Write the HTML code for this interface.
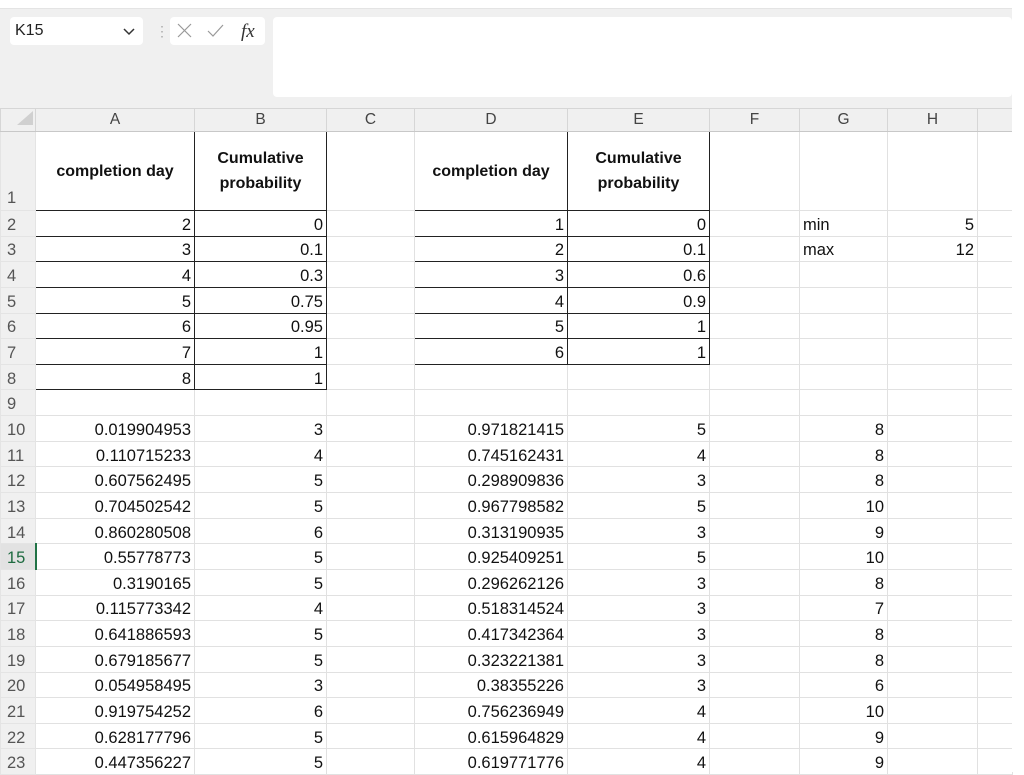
<!DOCTYPE html>
<html><head><meta charset="utf-8"><style>
*{margin:0;padding:0;box-sizing:border-box}
body{width:1024px;height:772px;overflow:hidden;background:#fff;font-family:"Liberation Sans",sans-serif;position:relative}
.bar{position:absolute;left:0;top:8px;width:1012px;height:100px;background:#f0f0f0;border-top:1px solid #e4e4e4}
.nb{position:absolute;left:10px;top:17px;width:133px;height:28px;background:#fff;border-radius:4px;font-size:16px;padding:5px 5px;color:#222}
.fx{position:absolute;left:170px;top:17px;width:95px;height:28px;background:#fff;border-radius:4px}
.fbox{position:absolute;left:273px;top:17px;width:739px;height:80px;background:#fff;border-radius:4px}
table{position:absolute;left:0;top:108px;border-collapse:collapse;table-layout:fixed;font-size:16.5px;color:#111}
td{border:1px solid #e1e1e1;height:25.65px;white-space:nowrap;overflow:hidden;padding:3px 3px 0;text-align:right;line-height:20px}
tr.h td{background:#f0f0f0;height:23px;padding:0;text-align:center;color:#444;font-size:15.5px;border-color:#d6d6d6;border-bottom:1px solid #c8c8c8}
td.rh{background:#f0f0f0;color:#555;text-align:left;padding-left:6px;border-color:#e4e4e4;font-size:16.5px}
tr.r1 td{height:79px}
td.b{border:1px solid #222}
td.hd{font-weight:bold;text-align:center;white-space:normal;line-height:25px;font-size:16px;padding:0 2px}
td.l{text-align:left}
</style></head><body>
<div class="bar"></div>
<div class="nb">K15<svg width="14" height="10" style="position:absolute;left:112px;top:10px"><path d="M2 2l5 5 5-5" stroke="#333" stroke-width="1.5" fill="none"/></svg></div>
<div style="position:absolute;left:155px;top:23px;color:#aaa;font-size:14px">&#8942;</div>
<div class="fx">
<svg width="95" height="28"><path d="M8 7l13 13M21 7L8 20" stroke="#999" stroke-width="1.2"/><path d="M38 14l5 5 10-11" stroke="#999" stroke-width="1.2" fill="none"/><text x="71" y="20" font-family="Liberation Serif" font-style="italic" font-size="19" fill="#333">fx</text></svg>
</div>
<div class="fbox"></div>
<table>
<colgroup><col style="width:35px"><col style="width:159px"><col style="width:132px"><col style="width:88px"><col style="width:153px"><col style="width:142px"><col style="width:90px"><col style="width:88px"><col style="width:90px"><col style="width:35px"></colgroup>
<tr class="h"><td style="background:#f0f0f0"><svg width="22" height="16" style="position:relative;top:2px;left:6px"><path d="M20 0L20 14L4 14Z" fill="#d0d0d0"/></svg></td><td>A</td><td>B</td><td>C</td><td>D</td><td>E</td><td>F</td><td>G</td><td>H</td><td></td></tr>
<tr class="r1"><td class="rh" style="vertical-align:bottom;padding-bottom:2px">1</td><td class="b hd">completion day</td><td class="b hd">Cumulative probability</td><td></td><td class="b hd">completion day</td><td class="b hd">Cumulative probability</td><td></td><td></td><td></td><td></td></tr>
<tr><td class="rh">2</td><td class="b">2</td><td class="b">0</td><td></td><td class="b">1</td><td class="b">0</td><td></td><td class="l">min</td><td>5</td><td></td></tr>
<tr><td class="rh">3</td><td class="b">3</td><td class="b">0.1</td><td></td><td class="b">2</td><td class="b">0.1</td><td></td><td class="l">max</td><td>12</td><td></td></tr>
<tr><td class="rh">4</td><td class="b">4</td><td class="b">0.3</td><td></td><td class="b">3</td><td class="b">0.6</td><td></td><td></td><td></td><td></td></tr>
<tr><td class="rh">5</td><td class="b">5</td><td class="b">0.75</td><td></td><td class="b">4</td><td class="b">0.9</td><td></td><td></td><td></td><td></td></tr>
<tr><td class="rh">6</td><td class="b">6</td><td class="b">0.95</td><td></td><td class="b">5</td><td class="b">1</td><td></td><td></td><td></td><td></td></tr>
<tr><td class="rh">7</td><td class="b">7</td><td class="b">1</td><td></td><td class="b">6</td><td class="b">1</td><td></td><td></td><td></td><td></td></tr>
<tr><td class="rh">8</td><td class="b">8</td><td class="b">1</td><td></td><td></td><td></td><td></td><td></td><td></td><td></td></tr>
<tr><td class="rh">9</td><td></td><td></td><td></td><td></td><td></td><td></td><td></td><td></td><td></td></tr>
<tr><td class="rh">10</td><td>0.019904953</td><td>3</td><td></td><td>0.971821415</td><td>5</td><td></td><td>8</td><td></td><td></td></tr>
<tr><td class="rh">11</td><td>0.110715233</td><td>4</td><td></td><td>0.745162431</td><td>4</td><td></td><td>8</td><td></td><td></td></tr>
<tr><td class="rh">12</td><td>0.607562495</td><td>5</td><td></td><td>0.298909836</td><td>3</td><td></td><td>8</td><td></td><td></td></tr>
<tr><td class="rh">13</td><td>0.704502542</td><td>5</td><td></td><td>0.967798582</td><td>5</td><td></td><td>10</td><td></td><td></td></tr>
<tr><td class="rh">14</td><td>0.860280508</td><td>6</td><td></td><td>0.313190935</td><td>3</td><td></td><td>9</td><td></td><td></td></tr>
<tr><td class="rh" style="background:#e2e2e2;color:#1e6b40;border-right:2px solid #217346">15</td><td>0.55778773</td><td>5</td><td></td><td>0.925409251</td><td>5</td><td></td><td>10</td><td></td><td></td></tr>
<tr><td class="rh">16</td><td>0.3190165</td><td>5</td><td></td><td>0.296262126</td><td>3</td><td></td><td>8</td><td></td><td></td></tr>
<tr><td class="rh">17</td><td>0.115773342</td><td>4</td><td></td><td>0.518314524</td><td>3</td><td></td><td>7</td><td></td><td></td></tr>
<tr><td class="rh">18</td><td>0.641886593</td><td>5</td><td></td><td>0.417342364</td><td>3</td><td></td><td>8</td><td></td><td></td></tr>
<tr><td class="rh">19</td><td>0.679185677</td><td>5</td><td></td><td>0.323221381</td><td>3</td><td></td><td>8</td><td></td><td></td></tr>
<tr><td class="rh">20</td><td>0.054958495</td><td>3</td><td></td><td>0.38355226</td><td>3</td><td></td><td>6</td><td></td><td></td></tr>
<tr><td class="rh">21</td><td>0.919754252</td><td>6</td><td></td><td>0.756236949</td><td>4</td><td></td><td>10</td><td></td><td></td></tr>
<tr><td class="rh">22</td><td>0.628177796</td><td>5</td><td></td><td>0.615964829</td><td>4</td><td></td><td>9</td><td></td><td></td></tr>
<tr><td class="rh">23</td><td>0.447356227</td><td>5</td><td></td><td>0.619771776</td><td>4</td><td></td><td>9</td><td></td><td></td></tr>
</table>
<div style="position:absolute;left:1012px;top:0;width:12px;height:772px;background:#fff"></div>
</body></html>
